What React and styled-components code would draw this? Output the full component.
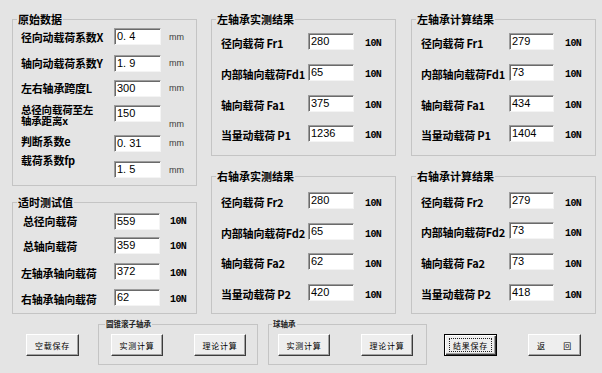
import React from "react";
import styled, { createGlobalStyle, css } from "styled-components";

const GlobalStyle = createGlobalStyle`
  body {
    margin: 0;
    background: #e4e4e4;
  }
`;

const CJK = `"Noto Sans CJK SC", "Noto Sans", sans-serif`;

const Screen = styled.div`
  width: 602px;
  height: 373px;
  box-sizing: border-box;
  padding: 19px 0 0 12px;
  background: #e4e4e4;
  font-family: ${CJK};
  color: #000;
  overflow: hidden;
`;

const Panels = styled.div`
  display: flex;
  align-items: flex-start;
`;

const Column = styled.div`
  display: flex;
  flex-direction: column;
  width: 185px;
  margin-left: ${(p) => p.$gap || 0}px;
`;

const Group = styled.div`
  position: relative;
  box-sizing: border-box;
  height: ${(p) => p.$h}px;
  margin-top: ${(p) => p.$mt || 0}px;
  padding-left: ${(p) => p.$pl}px;
  border: 1px solid #c4c4c4;
`;

const GroupTitle = styled.span`
  position: absolute;
  top: -8px;
  left: 4px;
  padding: 0 1px;
  background: #e4e4e4;
  font-size: 11px;
  font-weight: 700;
  line-height: 14px;
  white-space: nowrap;
`;

const Row = styled.div`
  display: grid;
  grid-template-columns: ${(p) => p.$labelW}px ${(p) => p.$inputW}px auto;
  align-items: start;
  height: 17px;
  margin-top: ${(p) => p.$mt}px;
`;

const Label = styled.div`
  margin-top: ${(p) => p.$dy}px;
  padding-left: ${(p) => p.$indent || 0}px;
  font-size: 11px;
  font-weight: 700;
  line-height: 13px;
  white-space: nowrap;
  letter-spacing: -0.2px;
  ${(p) =>
    p.$tall &&
    css`
      white-space: pre-line;
      line-height: 11px;
      font-size: 10.5px;
    `}
`;

const TextBox = styled.div`
  box-sizing: border-box;
  height: 17px;
  padding: 1px 2px 0;
  background: #fff;
  border: 1px solid;
  border-color: #9c9c9c #f4f4f4 #f4f4f4 #9c9c9c;
  box-shadow: inset 1px 1px 0 #6a6a6a;
  font: 11px/13px "Liberation Sans", Arial, sans-serif;
  white-space: pre;
`;

const Unit = styled.div`
  margin: ${(p) => p.$dy}px 0 0 ${(p) => p.$gap}px;
  line-height: 11px;
  white-space: nowrap;
  ${(p) =>
    p.$kind === "mm"
      ? css`
          font: 9px/11px "Liberation Sans", Arial, sans-serif;
          color: #3c3c3c;
        `
      : css`
          font: bold 10px/11px "Liberation Mono", "Courier New", monospace;
          letter-spacing: -0.6px;
        `}
`;

const BottomRow = styled.div`
  display: flex;
  align-items: flex-start;
  margin: 10px 0 0 14px;
`;

const Button = styled.button`
  display: flex;
  align-items: center;
  justify-content: center;
  box-sizing: border-box;
  width: ${(p) => p.$w || 53}px;
  height: 22px;
  margin: ${(p) => p.$mt || 0}px 0 0 ${(p) => p.$ml || 0}px;
  padding: 0;
  background: #eeeeee;
  border: 1px solid;
  border-color: #ffffff #3c3c3c #3c3c3c #ffffff;
  box-shadow: inset -1px -1px 0 #a2a2a2;
  font-family: ${CJK};
  font-size: 8px;
  letter-spacing: 0.8px;
  white-space: pre;
  color: #000;
  ${(p) =>
    p.$focused &&
    css`
      border-color: #000;
      box-shadow: inset 1px 1px 0 #fff, inset -1px -1px 0 #3c3c3c,
        inset -2px -2px 0 #a2a2a2;
    `}
`;

const FocusRing = styled.span`
  display: flex;
  align-items: center;
  justify-content: center;
  box-sizing: border-box;
  width: 43px;
  height: 14px;
  border: 1px dotted #222;
`;

const ButtonGroup = styled.div`
  position: relative;
  display: flex;
  box-sizing: border-box;
  width: ${(p) => p.$w}px;
  height: 41px;
  margin-left: ${(p) => p.$ml}px;
  padding: 9px 0 0 ${(p) => p.$pl}px;
  border: 1px solid #c4c4c4;
  gap: 31px;
`;

const SmallTitle = styled.span`
  position: absolute;
  top: -6px;
  left: ${(p) => p.$left}px;
  padding: 0 1px;
  background: #e4e4e4;
  font-size: 7.5px;
  font-weight: 700;
  line-height: 10px;
  color: #222;
  white-space: nowrap;
`;

const sourceRows = [
  { label: "径向动载荷系数X", value: "0. 4", mt: 8, ly: 3, uy: 4 },
  { label: "轴向动载荷系数Y", value: "1. 9", mt: 10, ly: 2, uy: 3 },
  { label: "左右轴承跨度L", value: "300", mt: 8, ly: 2, uy: 3 },
  { label: "总径向载荷至左\n轴承距离x", tall: true, value: "150", mt: 8, ly: -1, uy: 14 },
  { label: "判断系数e", value: "0. 31", mt: 13, ly: 0, uy: 3 },
  { label: "载荷系数fp", value: "1. 5", mt: 9, ly: -7, uy: 4 },
];

const liveRows = [
  { label: "总径向载荷", value: "559", mt: 10, ly: 2, uy: 3, indent: 2 },
  { label: "总轴向载荷", value: "359", mt: 7, ly: 3, uy: 4, indent: 2 },
  { label: "左轴承轴向载荷", value: "372", mt: 9, ly: 4, uy: 5 },
  { label: "右轴承轴向载荷", value: "62", mt: 9, ly: 4, uy: 5 },
];

const resultLabels = (n) => [
  `径向载荷 Fr${n}`,
  `内部轴向载荷Fd${n}`,
  `轴向载荷 Fa${n}`,
  `当量动载荷 P${n}`,
];

const makeRows = (n, values, mts, uy) =>
  resultLabels(n).map((label, i) => ({
    label,
    value: values[i],
    mt: mts[i],
    ly: 4,
    uy,
  }));

const FieldRows = ({ rows, unit, labelW, inputW, unitGap }) =>
  rows.map((r, i) => (
    <Row key={i} $mt={r.mt} $labelW={labelW} $inputW={inputW}>
      <Label $dy={r.ly} $indent={r.indent} $tall={r.tall}>
        {r.label}
      </Label>
      <TextBox>{r.value}</TextBox>
      <Unit $dy={r.uy} $gap={unitGap} $kind={unit}>
        {unit}
      </Unit>
    </Row>
  ));

const ResultGroup = ({ title, rows, h, mt, labelW, inputW }) => (
  <Group $h={h} $mt={mt} $pl={9}>
    <GroupTitle>{title}</GroupTitle>
    <FieldRows rows={rows} unit="10N" labelW={labelW} inputW={inputW} unitGap={11} />
  </Group>
);

export default function App() {
  return (
    <>
      <GlobalStyle />
      <Screen>
        <Panels>
          <Column>
            <Group $h={167} $pl={8}>
              <GroupTitle>原始数据</GroupTitle>
              <FieldRows rows={sourceRows} unit="mm" labelW={93} inputW={47} unitGap={8} />
            </Group>
            <Group $h={112} $mt={16} $pl={8}>
              <GroupTitle>适时测试值</GroupTitle>
              <FieldRows rows={liveRows} unit="10N" labelW={93} inputW={46} unitGap={10} />
            </Group>
          </Column>
          <Column $gap={14}>
            <ResultGroup
              title="左轴承实测结果"
              h={137}
              labelW={87}
              inputW={46}
              rows={makeRows(1, ["280", "65", "375", "1236"], [13, 14, 14, 13], 5)}
            />
            <ResultGroup
              title="右轴承实测结果"
              h={138}
              mt={20}
              labelW={87}
              inputW={46}
              rows={makeRows(2, ["280", "65", "62", "420"], [15, 14, 13, 14], 6)}
            />
          </Column>
          <Column $gap={15}>
            <ResultGroup
              title="左轴承计算结果"
              h={137}
              labelW={88}
              inputW={45}
              rows={makeRows(1, ["279", "73", "434", "1404"], [13, 14, 14, 13], 5)}
            />
            <ResultGroup
              title="右轴承计算结果"
              h={138}
              mt={20}
              labelW={88}
              inputW={45}
              rows={makeRows(2, ["279", "73", "73", "418"], [15, 13, 14, 14], 6)}
            />
          </Column>
        </Panels>
        <BottomRow>
          <Button $mt={10}>空载保存</Button>
          <ButtonGroup $w={160} $ml={19} $pl={12}>
            <SmallTitle $left={6}>圆锥滚子轴承</SmallTitle>
            <Button $w={52}>实测计算</Button>
            <Button $w={52}>理论计算</Button>
          </ButtonGroup>
          <ButtonGroup $w={159} $ml={10} $pl={9}>
            <SmallTitle $left={3}>球轴承</SmallTitle>
            <Button $w={52}>实测计算</Button>
            <Button $w={52}>理论计算</Button>
          </ButtonGroup>
          <Button $mt={10} $ml={17} $focused>
            <FocusRing>结果保存</FocusRing>
          </Button>
          <Button $mt={10} $ml={31}>
            返　　回
          </Button>
        </BottomRow>
      </Screen>
    </>
  );
}
